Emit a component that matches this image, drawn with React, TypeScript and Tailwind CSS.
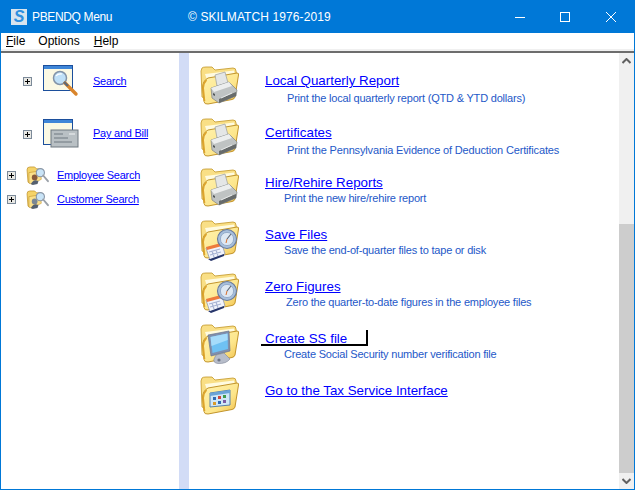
const font = "font-['Liberation_Sans',Arial,sans-serif]"

function Folder({ children }: { children?: React.ReactNode }) {
  return (
    <svg width="42" height="42" viewBox="0 2 42 42" className="shrink-0">
      <defs>
        <linearGradient id="fold" x1="0" y1="0" x2="1" y2="1">
          <stop offset="0" stopColor="#fff3b0" />
          <stop offset="0.6" stopColor="#fde68c" />
          <stop offset="1" stopColor="#f0bd45" />
        </linearGradient>
      </defs>
      <path d="M2 7 L3 4 Q4 3 7 3 L13 3 L16 6 L34 4 Q37 4 37 7 L38 14 L8 20 L5 34 L3 33 Z" fill="#f9df86" stroke="#c29526" strokeWidth="0.8" />
      <path d="M6 10 L35 6.5 L36 11 L8 16 Z" fill="#fffbe0" />
      <path d="M9 14 L38 9 Q40 9 39.5 11 L36 33 Q35.5 35 33 35.5 L9 40 Q5.5 40.5 5 37.5 L3.5 24 Q3.5 17 9 14 Z" fill="url(#fold)" stroke="#bb8a1c" strokeWidth="0.9" />
      <path d="M5.5 37 L4.2 24 Q4.5 19 7.5 16" fill="none" stroke="#dea42c" strokeWidth="1.6" />
      {children}
    </svg>
  )
}

function PrinterFolder() {
  return (
    <Folder>
      <path d="M16 11 L26 8 L29 19 L18 22 Z" fill="#e4e6e6" stroke="#9a9c9c" strokeWidth="0.7" />
      <path d="M12 24 L30 18 L38 26 L37 32 L20 39 L13 34 Z" fill="#bfc3c3" stroke="#7e8282" strokeWidth="0.7" />
      <path d="M12 24 L30 18 L33 22 L15 28 Z" fill="#eceeee" />
      <path d="M20 35 L37 28 L37 32 L20 39 Z" fill="#676b6b" />
      <path d="M14 29 L16 30 L16 32 L14 31 Z" fill="#55595a" />
      <path d="M22 34 L33 29" stroke="#e6e8e8" strokeWidth="1" />
    </Folder>
  )
}

function ClockFolder() {
  return (
    <Folder>
      <path d="M7 30 L23 26 L26 36 L11 42 Z" fill="#f1f3fb" stroke="#6f7ea8" strokeWidth="0.6" />
      <path d="M7 29 L22 25 L23 28 L8 32 Z" fill="#ee7b3c" />
      <path d="M10 34 L21 31 M11 37 L22 34 M13 33 L15 39 M17 32 L19 38" stroke="#a9b4d4" strokeWidth="1.2" />
      <path d="M9 41 L12 43 L25 38 L25 36 L11 41 Z" fill="#27366b" />
      <circle cx="28" cy="21" r="9.5" fill="#a6bfdc" stroke="#69799a" strokeWidth="1.1" />
      <circle cx="28" cy="21" r="6.6" fill="#dde8f3" stroke="#8ba2c2" strokeWidth="0.8" />
      <path d="M28 21 L32 16" stroke="#59606f" strokeWidth="1.1" />
      <path d="M28 21 L27 25" stroke="#d9702c" strokeWidth="1" />
    </Folder>
  )
}

function MonitorFolder() {
  return (
    <Folder>
      <path d="M9 13 L30 9 L31 29 L12 34 Z" fill="#7f8fae" stroke="#68738d" strokeWidth="0.7" />
      <path d="M11.5 15 L28.5 11.5 L29 27 L13.5 31 Z" fill="#6fc1f3" />
      <path d="M11.5 15 L28.5 11.5 L28.7 18 L12.5 24 Z" fill="#a6dcfb" />
      <path d="M17 33 L25 31 L31 37 Q27 42 19 41.5 Q14 41 15 37 Z" fill="#b7bdca" stroke="#7d8596" strokeWidth="0.6" />
      <circle cx="20" cy="38" r="1.6" fill="#6f7688" />
    </Folder>
  )
}

function GridFolder() {
  return (
    <Folder>
      <path d="M11 19 L31 16 L31 31 L11 33 Z" fill="#cfe7f7" stroke="#4575a8" strokeWidth="0.9" />
      <path d="M11 19 L31 16 L31 19 L11 22 Z" fill="#6aa3d6" />
      <rect x="14" y="23" width="3" height="3" fill="#2f6bb5" />
      <rect x="19" y="22" width="3" height="3" fill="#d0453b" />
      <rect x="24" y="21" width="3" height="3" fill="#3f9a4b" />
      <rect x="14" y="28" width="3" height="3" fill="#d99a2b" />
      <rect x="19" y="27" width="3" height="3" fill="#2f6bb5" />
      <rect x="24" y="26" width="3" height="3" fill="#7b5aa6" />
    </Folder>
  )
}

function SearchWindow() {
  return (
    <svg width="36" height="32" viewBox="0 0 36 32" className="shrink-0">
      <rect x="0.5" y="0.5" width="29" height="25" fill="#fbf9e4" stroke="#1c4f9c" />
      <rect x="1" y="1" width="28" height="3" fill="#3f86d8" />
      <circle cx="17" cy="13" r="6.5" fill="#bfe0f8" stroke="#8293a8" strokeWidth="1.5" />
      <path d="M13 11 Q15 8.5 19 9" fill="none" stroke="#fff" strokeWidth="1.2" />
      <path d="M22 18 L33 29" stroke="#d9852c" strokeWidth="3.4" strokeLinecap="round" />
      <path d="M21 17 L25 21" stroke="#5f6a78" strokeWidth="2.4" />
    </svg>
  )
}

function BillWindow() {
  return (
    <svg width="36" height="30" viewBox="0 0 36 30" className="shrink-0">
      <rect x="0.5" y="0.5" width="29" height="25" fill="#fbf9e4" stroke="#1c4f9c" />
      <rect x="1" y="1" width="28" height="3" fill="#3f86d8" />
      <rect x="8" y="11" width="27" height="17" fill="#b9c0c4" stroke="#6e7880" />
      <path d="M11 15 H20 M11 19 H25 M11 23 H29" stroke="#6e7880" strokeWidth="1" />
      <path d="M26 15 H32" stroke="#f2f4f5" strokeWidth="1" />
    </svg>
  )
}

function SmallSearchFolder({ person }: { person: string }) {
  return (
    <svg width="23" height="19" viewBox="0 0 24 20" className="shrink-0">
      <path d="M1 4 Q1 1 4 1 L9 1 L11 3 L16 3 L16 8 L4 18 L2 17 Z" fill="#f5d368" stroke="#b98a1f" strokeWidth="0.7" />
      <path d="M3 7 L15 5 L16 14 L6 19 L3 18 Z" fill="#fbe08a" stroke="#c0922a" strokeWidth="0.6" />
      <circle cx="9" cy="12" r="3" fill={person} />
      <path d="M5 19 Q8 13 13 16 L12 19 L7 20 Z" fill="#55606f" />
      <circle cx="15" cy="7" r="4.3" fill="#c9e4f7" stroke="#8b98a8" strokeWidth="1.2" />
      <path d="M18 10 L23 16" stroke="#9aa0a8" strokeWidth="2" strokeLinecap="round" />
    </svg>
  )
}

function Plus() {
  return (
    <span className="relative block size-[9px] shrink-0 border border-[#7c8a99] bg-[#e8e8e4]">
      <span className="absolute left-[1px] top-[3px] h-[1px] w-[5px] bg-black" />
      <span className="absolute left-[3px] top-[1px] h-[5px] w-[1px] bg-black" />
    </span>
  )
}

const rows = [
  { title: 'Local Quarterly Report', sub: 'Print the local quarterly report (QTD & YTD dollars)', icon: <PrinterFolder />, rowClass: 'h-[52px]', subClass: 'ml-[22px]' },
  { title: 'Certificates', sub: 'Print the Pennsylvania Evidence of Deduction Certificates', icon: <PrinterFolder />, rowClass: 'h-[50px]', subClass: 'ml-[22px] tracking-[-0.15px]' },
  { title: 'Hire/Rehire Reports', sub: 'Print the new hire/rehire report', icon: <PrinterFolder />, rowClass: 'h-[52px]', subClass: '-mt-[2px] ml-[19px]' },
  { title: 'Save Files', sub: 'Save the end-of-quarter files to tape or disk', icon: <ClockFolder />, rowClass: 'h-[52px]', subClass: '-mt-[2px] ml-[19px]' },
  { title: 'Zero Figures', sub: 'Zero the quarter-to-date figures in the employee files', icon: <ClockFolder />, rowClass: 'h-[52px]', subClass: '-mt-[2px] ml-[21px]' },
  { title: 'Create SS file', sub: 'Create Social Security number verification file', icon: <MonitorFolder />, rowClass: 'h-[52px]', subClass: '-mt-[2px] ml-[19px]', focused: true },
  { title: 'Go to the Tax Service Interface', icon: <GridFolder />, rowClass: 'h-[52px]' },
]

export default function App() {
  return (
    <div className={`${font} flex h-[490px] w-[635px] flex-col overflow-hidden border border-[#0078d7] bg-white`}>
      <div className="flex h-[32px] shrink-0 items-center bg-[#0078d7] text-[12px] text-white">
        <span className="ml-[10px] flex h-[16px] w-[16px] items-center justify-center bg-[#d8e4ee] text-[16px] font-bold italic leading-none text-[#2f8fe0]">S</span>
        <span className="ml-[5px] w-[156px] tracking-[-0.35px]">PBENDQ Menu</span>
        <span className="tracking-[0.1px]">© SKILMATCH 1976-2019</span>
        <div className="ml-auto flex items-center">
          <span className="mr-[35px] h-[1px] w-[10px] bg-white" />
          <span className="mr-[36px] size-[10px] border border-white" />
          <svg width="10" height="10" viewBox="0 0 10 10" className="mr-[18px]">
            <path d="M0 0 L10 10 M10 0 L0 10" stroke="#fff" strokeWidth="1" />
          </svg>
        </div>
      </div>

      <div className="flex h-[16px] shrink-0 items-center bg-white text-[12px] text-black">
        <span className="ml-[5px]"><span className="underline">F</span>ile</span>
        <span className="ml-[13px]">Options</span>
        <span className="ml-[14px]"><span className="underline">H</span>elp</span>
      </div>
      <div className="h-[2px] shrink-0 bg-[#f0f0f0]" />
      <div className="h-[2px] shrink-0 bg-[#6d6d6d]" />

      <div className="flex min-h-0 flex-1">
        <div className="flex w-[178px] shrink-0 flex-col text-[11px] tracking-[-0.25px] text-[#0000ff]">
          <div className="ml-[22px] mt-[12px] flex items-center">
            <Plus />
            <span className="ml-[11px] flex w-[50px]"><SearchWindow /></span>
            <a className="underline">Search</a>
          </div>
          <div className="ml-[22px] mt-[22px] flex items-center">
            <Plus />
            <span className="ml-[11px] flex w-[50px]"><BillWindow /></span>
            <a className="-mt-[1px] underline">Pay and Bill</a>
          </div>
          <div className="ml-[6px] mt-[17px] flex items-center">
            <Plus />
            <span className="ml-[10px] flex w-[31px]"><SmallSearchFolder person="#8a5a3a" /></span>
            <a className="underline">Employee Search</a>
          </div>
          <div className="ml-[6px] mt-[5px] flex items-center">
            <Plus />
            <span className="ml-[10px] flex w-[31px]"><SmallSearchFolder person="#7b8794" /></span>
            <a className="underline">Customer Search</a>
          </div>
        </div>

        <div className="w-[10px] shrink-0 bg-[#d2dcf6]" />

        <div className="flex min-w-0 flex-1 flex-col pl-[10px] pt-[13px]">
          {rows.map((r) => (
            <div key={r.title} className={`flex shrink-0 ${r.rowClass}`}>
              <div className="flex w-[40px] shrink-0">{r.icon}</div>
              <div className="ml-[26px] pt-[6px]">
                <a className={`block h-[18px] text-[13.33px] leading-[18px] text-[#0000ff] underline ${r.focused ? 'relative' : ''}`}>
                  {r.title}
                  {r.focused && <span className="absolute -left-[4px] top-0 h-[16px] w-[107px] border-b-2 border-r-2 border-b-black border-r-black" />}
                </a>
                {r.sub && <div className={`h-[16px] whitespace-nowrap text-[11px] leading-[16px] tracking-[-0.2px] text-[#2458c8] ${r.subClass}`}>{r.sub}</div>}
              </div>
            </div>
          ))}
        </div>

        <div className="flex w-[15px] shrink-0 flex-col bg-[#f0f0f0]">
          <div className="flex h-[16px] items-center justify-center">
            <svg width="9" height="6" viewBox="0 0 9 6"><path d="M0.5 5 L4.5 1 L8.5 5" fill="none" stroke="#606060" strokeWidth="2" /></svg>
          </div>
          <div className="mt-[155px] w-full flex-1 bg-[#cdcdcd]" />
          <div className="flex h-[16px] items-center justify-center">
            <svg width="9" height="6" viewBox="0 0 9 6"><path d="M0.5 1 L4.5 5 L8.5 1" fill="none" stroke="#606060" strokeWidth="2" /></svg>
          </div>
        </div>
      </div>
    </div>
  )
}
